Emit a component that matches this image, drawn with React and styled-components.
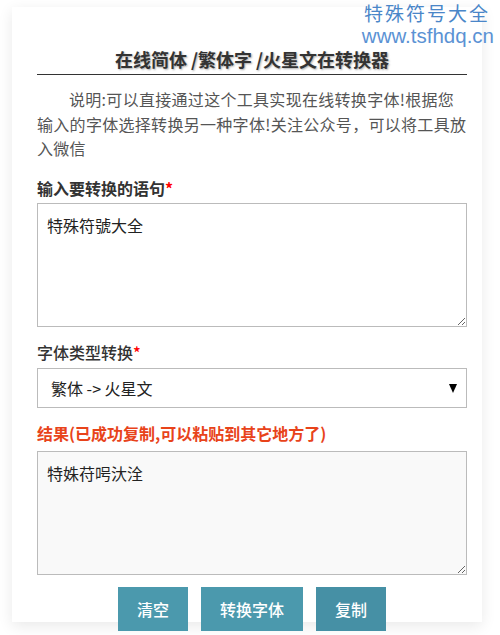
import React from 'react';
import styled, { createGlobalStyle } from 'styled-components';

const GlobalStyle = createGlobalStyle`
  html, body {
    margin: 0;
    padding: 0;
    background: #fff;
  }
  body {
    font-family: "Noto Sans CJK SC", "Noto Sans", sans-serif;
    color: #333;
  }
`;

const Page = styled.div`
  position: relative;
  width: 500px;
  height: 635px;
  overflow: hidden;
  padding: 7px 0 0 12px;
  box-sizing: border-box;
`;

const Card = styled.div`
  width: 470px;
  height: 615px;
  box-sizing: border-box;
  padding: 38px 15px 0 25px;
  background: #fff;
  box-shadow: 0 4px 14px rgba(0, 0, 0, 0.09);
`;

const Title = styled.h1`
  margin: 0;
  font-size: 18px;
  line-height: 29px;
  font-weight: bold;
  text-align: center;
  color: #333;
  text-shadow: 1px 1px 2px #aaa;
  border-bottom: 1px solid #333;
`;

const Intro = styled.p`
  margin: 12px 0 0;
  font-size: 16px;
  line-height: 24.5px;
  letter-spacing: 0.3px;
  color: #555;
  text-indent: 2em;
`;

const Label = styled.div`
  margin-top: ${p => p.$top}px;
  font-size: 16px;
  line-height: 24px;
  font-weight: ${p => (p.$light ? 500 : 'bold')};
  color: ${p => p.$color || '#333'};
`;

const Star = styled.span`
  color: #f00;
`;

const Area = styled.textarea`
  display: block;
  margin: ${p => p.$top}px 0 0;
  width: 430px;
  height: 124px;
  box-sizing: border-box;
  padding: 10px 9px;
  border: 1px solid #bbb;
  background: ${p => (p.$readonly ? '#f9f9f9' : '#fff')};
  font-family: "Noto Sans CJK SC", sans-serif;
  font-size: 16px;
  line-height: 22px;
  color: #222;
  outline: none;
`;

const SelectWrap = styled.div`
  position: relative;
  margin-top: 4px;
  width: 430px;
`;

const Select = styled.select`
  display: block;
  width: 100%;
  height: 40px;
  box-sizing: border-box;
  padding: 0 0 0 13px;
  border: 1px solid #bbb;
  border-radius: 0;
  background: #fff;
  appearance: none;
  font-family: "Noto Sans CJK SC", sans-serif;
  font-size: 16px;
  color: #222;
  outline: none;
`;

const Arrow = styled.svg`
  position: absolute;
  right: 10px;
  top: 16px;
  pointer-events: none;
`;

const Buttons = styled.div`
  display: flex;
  justify-content: center;
  gap: 13px;
  margin-top: 12px;
  width: 430px;
`;

const Button = styled.button`
  height: 44px;
  padding: 0 19px;
  border: 0;
  background: ${p => (p.$dark ? '#4690a5' : '#4b99ad')};
  color: #fff;
  font-family: "Noto Sans CJK SC", sans-serif;
  font-size: 16px;
  font-weight: 500;
  cursor: pointer;
`;

const Watermark = styled.div`
  position: absolute;
  top: 1px;
  right: 6px;
  display: flex;
  flex-direction: column;
  align-items: flex-end;
  color: #4a86c8;
  pointer-events: none;
`;

const MarkName = styled.div`
  font-family: "Noto Sans CJK SC", sans-serif;
  font-size: 19px;
  line-height: 23px;
  letter-spacing: 2px;
  margin-right: 4px;
`;

const MarkUrl = styled.div`
  font-family: "Liberation Sans", Arial, sans-serif;
  font-size: 20.5px;
  line-height: 24px;
  color: #5b92d4;
`;

export default function App() {
  return (
    <>
      <GlobalStyle />
      <Page>
        <Card>
          <Title>在线简体 /繁体字 /火星文在转换器</Title>
          <Intro>
            说明:可以直接通过这个工具实现在线转换字体!根据您输入的字体选择转换另一种字体!关注公众号，可以将工具放入微信
          </Intro>
          <Label $top={15}>
            输入要转换的语句<Star>*</Star>
          </Label>
          <Area $top={3} defaultValue="特殊符號大全" />
          <Label $top={13} $light>
            字体类型转换<Star>*</Star>
          </Label>
          <SelectWrap>
            <Select defaultValue="f2h">
              <option value="j2f">简体 -&gt; 繁体</option>
              <option value="f2j">繁体 -&gt; 简体</option>
              <option value="f2h">繁体 -&gt; 火星文</option>
            </Select>
            <Arrow width="8" height="9" viewBox="0 0 8 9">
              <path d="M0 0 H8 L4 9 Z" fill="#000" />
            </Arrow>
          </SelectWrap>
          <Label $top={13} $color="#e8431a">
            结果(已成功复制,可以粘贴到其它地方了)
          </Label>
          <Area $top={6} $readonly readOnly defaultValue="特姝苻呺汏洤" />
          <Buttons>
            <Button>清空</Button>
            <Button>转换字体</Button>
            <Button $dark>复制</Button>
          </Buttons>
        </Card>
        <Watermark>
          <MarkName>特殊符号大全</MarkName>
          <MarkUrl>www.tsfhdq.cn</MarkUrl>
        </Watermark>
      </Page>
    </>
  );
}
